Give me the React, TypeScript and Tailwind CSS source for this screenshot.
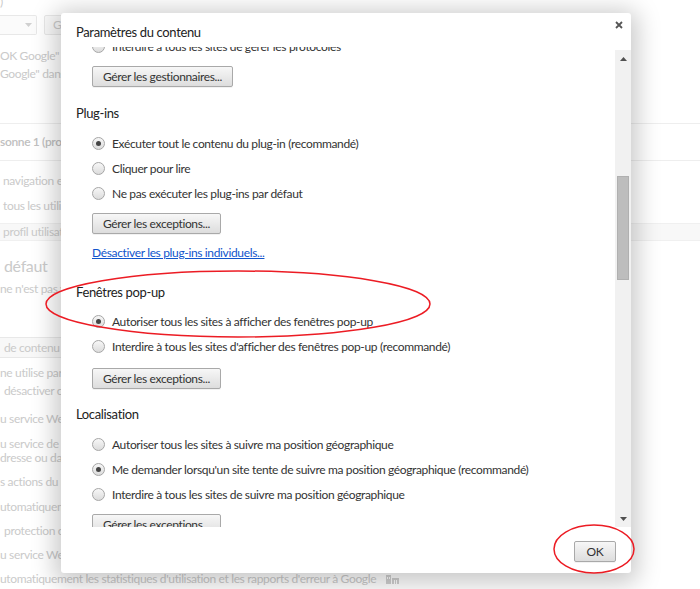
import type { ReactNode } from "react";

function Radio({ checked }: { checked?: boolean }) {
  return (
    <span className="flex h-[13px] w-[13px] shrink-0 items-center justify-center rounded-full border border-[#a6a6a6] bg-linear-to-b from-[#f7f7f7] to-[#dcdcdc]">
      {checked && <span className="h-[5px] w-[5px] rounded-full bg-[#444]" />}
    </span>
  );
}

function Option({ children, checked, className = "" }: { children: ReactNode; checked?: boolean; className?: string }) {
  return (
    <div className={`flex h-[25px] shrink-0 items-center gap-[7px] pl-[16px] ${className}`}>
      <Radio checked={checked} />
      <span className="whitespace-nowrap">{children}</span>
    </div>
  );
}

function Btn({ children, className = "" }: { children: ReactNode; className?: string }) {
  return (
    <div
      className={`flex h-[21px] shrink-0 items-center self-start whitespace-nowrap rounded-[2px] border border-[#a9a9a9] bg-linear-to-b from-[#f7f7f7] to-[#dddddd] px-[10px] text-[#333] shadow-[0_1px_0_rgba(0,0,0,0.05)] ${className}`}
    >
      {children}
    </div>
  );
}

function Heading({ children, className = "" }: { children: ReactNode; className?: string }) {
  return <div className={`flex h-[26px] shrink-0 items-center text-[13px] text-[#222] ${className}`}>{children}</div>;
}

function Bg({ children, className = "" }: { children: ReactNode; className?: string }) {
  return <div className={`h-[18px] shrink-0 whitespace-nowrap leading-[18px] ${className}`}>{children}</div>;
}

export default function App() {
  return (
    <div className="relative h-[589px] w-[700px] overflow-hidden bg-white font-['Lato','Open_Sans',sans-serif] text-[12px] tracking-[-0.35px] text-[#333]">
      {/* faded settings page behind the dialog */}
      <div className="flex flex-col text-[12px] text-[#cacaca]">
        <div className="mt-[-5px] h-[14px] leading-[14px]">)</div>
        <div className="mt-[6px] flex h-[20px] shrink-0 gap-[7px]">
          <div className="flex w-[37px] items-center justify-end rounded-r-[2px] border border-l-0 border-[#e8e8e8] bg-[#fbfbfb] pr-[4px]">
            <svg width="7" height="4" viewBox="0 0 7 4">
              <path d="M0 0h7L3.5 4z" fill="#d0d0d0" />
            </svg>
          </div>
          <div className="flex w-[80px] items-center rounded-[2px] border border-[#e8e8e8] bg-[#f9f9f9] pl-[8px]">Gérer</div>
        </div>
        <Bg className="mt-[12px]">OK Google" pour lancer une recherche vocale</Bg>
        <Bg>Google" dans le champ de recherche</Bg>
        <div className="mt-[40px] h-px shrink-0 bg-[#eeeeee]" />
        <Bg className="mt-[9px] font-semibold text-[#c0c0c0]">sonne 1 (profil actuel)</Bg>
        <div className="mt-[9px] h-px shrink-0 bg-[#eeeeee]" />
        <Bg className="mt-[11px] pl-[3px]">navigation et de synchronisation</Bg>
        <Bg className="mt-[7px] pl-[3px]">tous les utilisateurs</Bg>
        <div className="mt-[8px] flex h-[18px] shrink-0 items-center border-y border-[#f0f0f0] bg-[#f8f8f8] pl-[3px]">profil utilisateur</div>
        <div className="mt-[14px] h-[22px] shrink-0 pl-[4px] text-[16px] leading-[22px]">défaut</div>
        <Bg className="mt-[3px]">ne n'est pas votre navigateur par défaut</Bg>
        <div className="mt-[39px] flex h-[21px] w-[100px] shrink-0 items-center rounded-r-[2px] border border-l-0 border-[#e8e8e8] bg-[#f8f8f8] pl-[4px]">
          de contenu
        </div>
        <Bg className="mt-[6px]">ne utilise parfois des services Web</Bg>
        <Bg className="pl-[4px]">désactiver ces services</Bg>
        <Bg className="mt-[10px]">u service Web pour résoudre</Bg>
        <div className="mt-[9px] h-[14px] shrink-0 leading-[14px]">u service de prédictions</div>
        <div className="h-[14px] shrink-0 leading-[14px]">dresse ou dans le champ</div>
        <Bg className="mt-[8px]">s actions du réseau</Bg>
        <Bg className="mt-[7px]">utomatiquement</Bg>
        <Bg className="mt-[6px] pl-[4px]">protection contre</Bg>
        <Bg className="mt-[6px]">u service Web</Bg>
        <div className="mt-[6px] flex h-[18px] shrink-0 items-center gap-[10px] whitespace-nowrap">
          <span>utomatiquement les statistiques d'utilisation et les rapports d'erreur à Google</span>
          <svg width="13" height="10" viewBox="0 0 13 10">
            <rect x="0" y="1" width="5" height="9" fill="#d0d0d0" />
            <rect x="6" y="4" width="7" height="6" fill="#d0d0d0" />
            <rect x="1" y="3" width="1" height="2" fill="#fff" />
            <rect x="3" y="3" width="1" height="2" fill="#fff" />
            <rect x="8" y="6" width="1" height="4" fill="#fff" />
            <rect x="10" y="6" width="1" height="4" fill="#fff" />
          </svg>
        </div>
      </div>

      {/* dialog */}
      <div className="absolute left-[61px] top-[13px] flex h-[560px] w-[570px] flex-col rounded-[3px] bg-white shadow-[0_4px_24px_6px_rgba(0,0,0,0.22)]">
        <div className="flex h-[34px] shrink-0 justify-between pl-[15px] pr-[8px]">
          <div className="pt-[12px] text-[13px] leading-[14px] text-[#222]">Paramètres du contenu</div>
          <svg className="mt-[8px]" width="8" height="8" viewBox="0 0 8 8">
            <path d="M1 1l6 6M7 1L1 7" stroke="#555" strokeWidth="1.8" />
          </svg>
        </div>

        <div className="flex h-[480px] shrink-0">
          <div className="flex-1 overflow-hidden pl-[15px]">
            <div className="mt-[-13px] flex flex-col">
              <Option>Interdire à tous les sites de gérer les protocoles</Option>
              <Btn className="ml-[16px] mt-[7px]">Gérer les gestionnaires...</Btn>
              <Heading className="mt-[14px]">Plug-ins</Heading>
              <Option className="mt-[4px]" checked>
                Exécuter tout le contenu du plug-in (recommandé)
              </Option>
              <Option>Cliquer pour lire</Option>
              <Option>Ne pas exécuter les plug-ins par défaut</Option>
              <Btn className="ml-[16px] mt-[7px]">Gérer les exceptions...</Btn>
              <div className="mt-[9px] flex h-[20px] shrink-0 items-center pl-[16px]">
                <a href="#" className="text-[#1155cc] underline">
                  Désactiver les plug-ins individuels...
                </a>
              </div>
              <Heading className="mt-[17px]">Fenêtres pop-up</Heading>
              <Option className="mt-[3px]" checked>
                Autoriser tous les sites à afficher des fenêtres pop-up
              </Option>
              <Option>Interdire à tous les sites d'afficher des fenêtres pop-up (recommandé)</Option>
              <Btn className="ml-[16px] mt-[9px]">Gérer les exceptions...</Btn>
              <Heading className="mt-[13px]">Localisation</Heading>
              <Option className="mt-[4px]">Autoriser tous les sites à suivre ma position géographique</Option>
              <Option checked>Me demander lorsqu'un site tente de suivre ma position géographique (recommandé)</Option>
              <Option>Interdire à tous les sites de suivre ma position géographique</Option>
              <Btn className="ml-[16px] mt-[7px]">Gérer les exceptions...</Btn>
            </div>
          </div>

          {/* scrollbar */}
          <div className="mt-[3px] flex w-[16px] flex-col bg-[#f1f1f1]">
            <div className="flex h-[17px] shrink-0 items-center justify-center">
              <svg width="7" height="4" viewBox="0 0 7 4">
                <path d="M3.5 0L7 4H0z" fill="#505050" />
              </svg>
            </div>
            <div className="mx-[2px] mt-[109px] h-[104px] shrink-0 border border-[#b0b0b0] bg-[#bdbdbd]" />
            <div className="flex-1" />
            <div className="flex h-[17px] shrink-0 items-center justify-center">
              <svg width="7" height="4" viewBox="0 0 7 4">
                <path d="M0 0h7L3.5 4z" fill="#505050" />
              </svg>
            </div>
          </div>
        </div>

        <div className="flex flex-1 items-start justify-end pr-[15px] pt-[14px]">
          <Btn className="w-[42px] justify-center px-0">OK</Btn>
        </div>
      </div>

      {/* red annotation marks */}
      <svg className="pointer-events-none absolute inset-0" width="700" height="589" viewBox="0 0 700 589">
        <ellipse cx="238" cy="304" rx="192" ry="33" fill="none" stroke="#ec1c24" strokeWidth="1.5" />
        <ellipse cx="594" cy="549" rx="40" ry="24" fill="none" stroke="#ec1c24" strokeWidth="1.5" />
      </svg>
    </div>
  );
}
